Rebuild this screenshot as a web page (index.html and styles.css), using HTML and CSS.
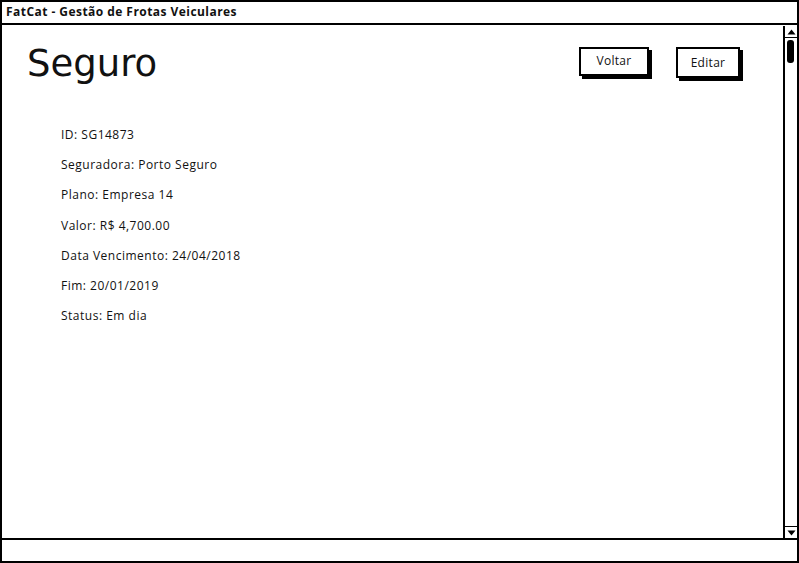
FILE: index.html
```html
<!DOCTYPE html>
<html>
<head>
<meta charset="utf-8">
<link rel="stylesheet" href="styles.css">
</head>
<body>
<div class="window">
  <div class="titlebar">FatCat - Gestão de Frotas Veiculares</div>
  <div class="body">
    <div class="content">
      <div class="header">
        <h1 class="title">Seguro</h1>
        <div class="buttons">
          <div class="btn btn-voltar">Voltar</div>
          <div class="btn btn-editar">Editar</div>
        </div>
      </div>
      <div class="fields">
        <div class="field">ID: SG14873</div>
        <div class="field">Seguradora: Porto Seguro</div>
        <div class="field">Plano: Empresa 14</div>
        <div class="field">Valor: R$ 4,700.00</div>
        <div class="field">Data Vencimento: 24/04/2018</div>
        <div class="field">Fim: 20/01/2019</div>
        <div class="field">Status: Em dia</div>
      </div>
    </div>
    <div class="scrollbar">
      <div class="arrow up"><svg width="9" height="6" viewBox="0 0 9 6"><path d="M0.5 5.5 L4.5 0.5 L8.5 5.5 Z" fill="#000"/></svg></div>
      <div class="track"><div class="thumb"></div></div>
      <div class="arrow down"><svg width="9" height="6" viewBox="0 0 9 6"><path d="M0.5 0.5 L4.5 5.5 L8.5 0.5 Z" fill="#000"/></svg></div>
    </div>
  </div>
  <div class="statusbar"></div>
</div>
</body>
</html>
```
FILE: styles.css
```css
* { box-sizing: border-box; }
html, body { margin: 0; padding: 0; background: #fff; }
body { width: 799px; height: 563px; overflow: hidden; font-family: "Open Sans", Lato, sans-serif; color: #111; }
.window {
  width: 799px; height: 563px;
  border: 2px solid #000;
  display: flex; flex-direction: column;
}
.titlebar {
  height: 23px;
  border-bottom: 2px solid #000;
  font-size: 12px; font-weight: 700;
  line-height: 16px;
  letter-spacing: 0.45px;
  padding: 2px 0 0 4px;
}
.body { flex: 1; display: flex; min-height: 0; }
.content { flex: 1; padding: 0 0 0 25px; }
.header { display: flex; justify-content: space-between; align-items: flex-start; }
.title {
  margin: 17px 0 0 0;
  font-family: "DejaVu Sans", sans-serif;
  font-size: 37px; font-weight: 400; line-height: 44px;
}
.buttons { display: flex; gap: 27px; margin: 22px 43px 0 0; }
.btn {
  border: 2px solid #000;
  box-shadow: 3px 3px 0 #000;
  background: #fff;
  font-size: 12px;
  letter-spacing: 0.3px;
  display: flex; align-items: center; justify-content: center;
}
.btn-voltar { width: 70px; height: 29px; padding-bottom: 3px; }
.btn-editar { width: 64px; height: 31px; }
.fields { padding: 40px 0 0 34px; display: flex; flex-direction: column; }
.field { font-size: 12px; height: 30.2px; line-height: 18px; letter-spacing: 0.5px; }
.scrollbar {
  width: 14px;
  border-left: 2px solid #000;
  display: flex; flex-direction: column;
  margin-top: 1px;
}
.arrow { height: 12px; display: flex; align-items: center; justify-content: center; }
.arrow.up { border-bottom: 1px solid #000; }
.arrow.down { border-top: 1px solid #000; }
.track { flex: 1; }
.thumb { width: 7px; height: 23px; background: #000; border-radius: 3px; margin: 2px 0 0 2px; }
.statusbar { height: 23px; border-top: 2px solid #000; }
```
